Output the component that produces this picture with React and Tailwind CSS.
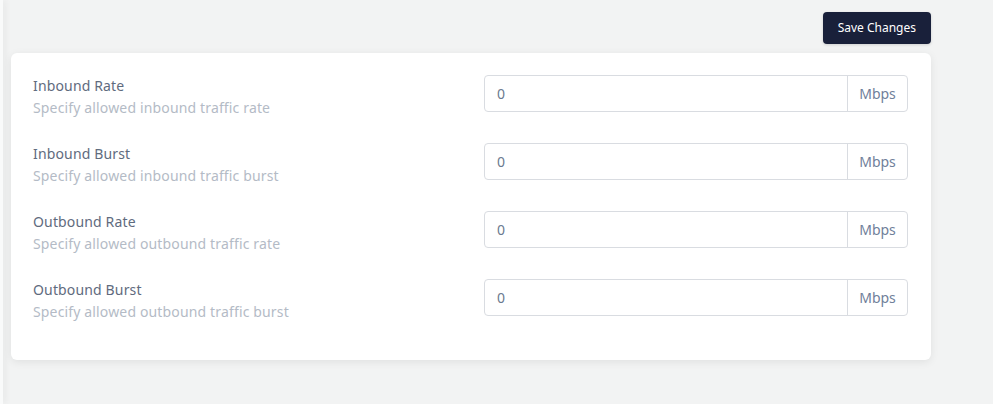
import { useState } from "react";

const campos = [
  { id: "inRate", label: "Inbound Rate", desc: "Specify allowed inbound traffic rate" },
  { id: "inBurst", label: "Inbound Burst", desc: "Specify allowed inbound traffic burst" },
  { id: "outRate", label: "Outbound Rate", desc: "Specify allowed outbound traffic rate" },
  { id: "outBurst", label: "Outbound Burst", desc: "Specify allowed outbound traffic burst" },
];

export default function App() {
  const [valores, setValores] = useState({ inRate: "0", inBurst: "0", outRate: "0", outBurst: "0" });

  return (
    <div className="flex h-[404px] w-[993px] bg-[#f2f3f3] font-['Noto_Sans',sans-serif]">
      {/* borde del panel lateral */}
      <div className="w-[3px] h-full bg-[#f9fafa] shadow-[2px_0_6px_rgba(0,0,0,0.08)]"></div>

      <main className="flex-1 pl-2 pr-[62px] pt-3">
        <div className="flex justify-end">
          <button className="h-8 px-[15px] rounded bg-[#19203a] text-white text-xs shadow-[0_1px_3px_rgba(0,0,0,0.15)]">
            Save Changes
          </button>
        </div>

        <div className="mt-[9px] bg-white rounded-md shadow-[0_2px_8px_rgba(0,0,0,0.08)] pl-[22px] pr-[23px] pt-[22px] pb-[38px] flex flex-col gap-[25px]">
          {campos.map((c) => (
            <div key={c.id} className="flex items-start justify-between">
              <div className="flex flex-col gap-[2px] leading-5 pt-[1px] tracking-[0.15px]">
                <label className="text-sm text-[#5f6b7e]">{c.label}</label>
                <span className="text-sm text-[#b4bbc6]">{c.desc}</span>
              </div>
              <div className="flex w-[424px] h-[37px] border border-[#d9dce1] rounded">
                <input
                  type="text"
                  value={valores[c.id]}
                  onChange={(e) => setValores({ ...valores, [c.id]: e.target.value })}
                  className="flex-1 min-w-0 px-[12px] text-sm text-[#6b7a90] outline-none bg-transparent"
                />
                <span className="w-[60px] border-l border-[#d9dce1] flex items-center justify-center text-sm text-[#70809a]">
                  Mbps
                </span>
              </div>
            </div>
          ))}
        </div>
      </main>
    </div>
  );
}
